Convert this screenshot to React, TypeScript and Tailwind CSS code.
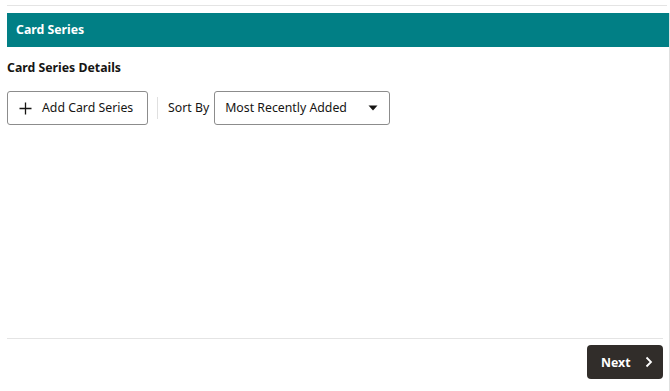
import React from "react";

export default function App() {
  return (
    <div
      className="w-[670px] h-[391px] bg-white flex overflow-hidden text-[#161513]"
      style={{ fontFamily: '"Noto Sans", "Open Sans", sans-serif' }}
    >
      <div className="w-[7px] shrink-0" />
      <div className="w-[662px] flex flex-col">
        <div className="mt-[5px] h-px w-[660px] bg-[#e4e4e4]" />
        <div className="mt-[7px] h-[34px] bg-[#017f85] flex items-center px-[9px]">
          <span className="text-white text-[12.3px] font-bold">Card Series</span>
        </div>
        <div className="mt-[12px] h-[18px] flex items-center text-[12.3px] font-bold">
          Card Series Details
        </div>
        <div className="mt-[14px] flex items-center h-[34px]">
          <button className="h-[34px] w-[141px] border border-[#8c8c8c] rounded-[3px] flex items-center pl-[11px] text-[12.3px]">
            <svg width="13" height="13" viewBox="0 0 13 13" className="mr-[10px]">
              <path d="M6.5 0.5v12M0.5 6.5h12" stroke="#161513" strokeWidth="1.3" />
            </svg>
            Add Card Series
          </button>
          <div className="ml-[9px] w-px h-[22px] bg-[#e0e0e0]" />
          <span className="ml-[10px] text-[12.3px]">Sort By</span>
          <div className="ml-[5px] h-[34px] w-[176px] border border-[#8c8c8c] rounded-[3px] flex items-center pl-[10px] pr-[11px] text-[12.3px]">
            <span className="flex-1">Most Recently Added</span>
            <svg width="10" height="6" viewBox="0 0 10 6">
              <path d="M0.5 0.5h9L5 5.5z" fill="#161513" />
            </svg>
          </div>
        </div>
        <div className="flex-1" />
        <div className="h-px w-[656px] bg-[#e4e4e4]" />
        <div className="mt-[6px] mb-[12px] w-[656px] flex justify-end">
          <button className="h-[34px] w-[76px] rounded-[4px] bg-[#312d2a] text-white flex items-center pl-[14px] text-[12.3px] font-bold">
            <span className="mt-[2px]">Next</span>
            <svg width="8" height="12" viewBox="0 0 8 12" className="ml-[14px]">
              <path d="M1.5 1.5L6 6l-4.5 4.5" stroke="#ffffff" strokeWidth="1.8" fill="none" />
            </svg>
          </button>
        </div>
      </div>
      <div className="mt-[13px] w-px bg-[#e0e0e0]" />
    </div>
  );
}
